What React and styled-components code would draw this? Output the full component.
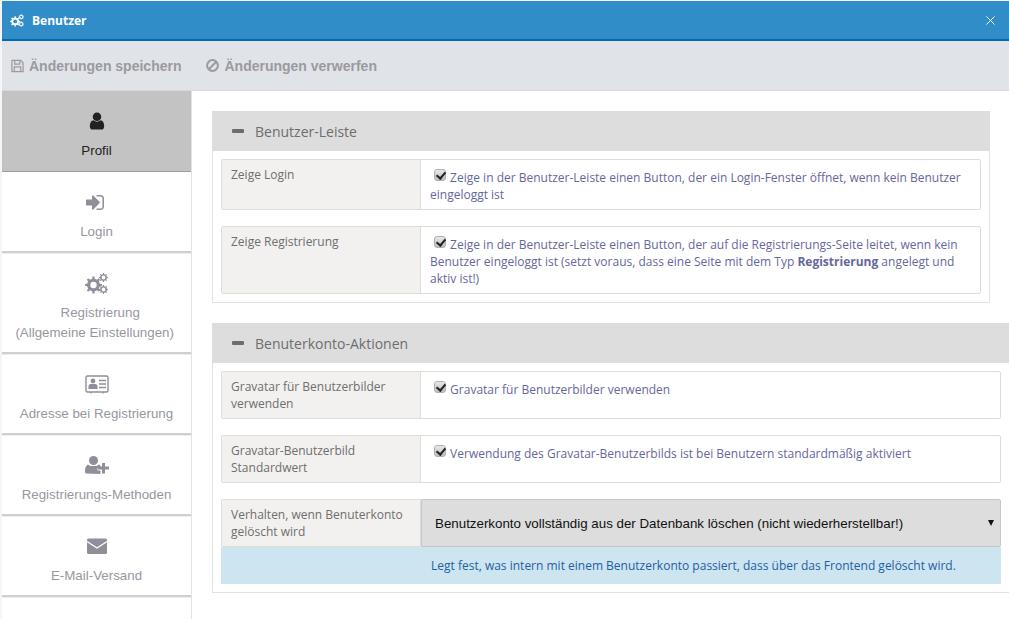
import React from 'react';
import styled, { createGlobalStyle } from 'styled-components';

const Global = createGlobalStyle`
  html, body { margin: 0; padding: 0; width: 1009px; height: 619px; overflow: hidden; background: #f5f5f5; }
  * { box-sizing: border-box; }
  #root { width: 1009px; height: 619px; overflow: hidden; }
`;
const Win = styled.div`
  margin: 1px 0 0 2px; width: 1007px; height: 618px; display: flex; flex-direction: column; background: #fff; overflow: hidden;
`;
const TitleBar = styled.header`
  height: 40px; flex: none; background: #308dc7; border-bottom: 2px solid #0069b4; display: flex; align-items: center;
  color: #fff; padding: 0 14px 0 8px; font: 700 12px "Open Sans", sans-serif;
`;
const TitleIcon = styled.span` display: flex; margin-right: 8px; `;
const Title = styled.span` flex: 1; `;
const Close = styled.svg` width: 9px; height: 9px; flex: none; `;
const Toolbar = styled.div`
  height: 50px; flex: none; background: #e0e3e8; border-bottom: 1px solid #d6d8dc; display: flex; align-items: center; padding: 0 0 0 9px; gap: 25px;
`;
const ToolBtn = styled.span`
  display: flex; align-items: center; gap: 5px; color: #9a9a9f; font: 700 14px "Liberation Sans", sans-serif; white-space: nowrap;
`;
const Body = styled.div` flex: 1; display: flex; min-height: 0; `;
const Side = styled.nav` width: 190px; flex: none; border-right: 1px solid #e2e2e2; `;
const Item = styled.div`
  height: ${p => p.$h || 81}px; display: flex; flex-direction: column; align-items: center; padding-top: 19px;
  background: ${p => p.$active ? '#c3c3c3' : 'transparent'};
  border-bottom: ${p => p.$active ? '1px solid #9c9c9c' : '0'};
  box-shadow: ${p => p.$active ? 'none' : 'inset 0 -2px 0 #cfcfcf, 0 1px 0 #ededed'};
  color: ${p => p.$active ? '#222' : '#97979f'};
  font: 13.33px/20px "Liberation Sans", sans-serif; text-align: center;
`;
const IconBox = styled.div`
  height: 22px; margin-bottom: 9px; display: flex; align-items: center; justify-content: center;
  color: ${p => p.$active ? '#222' : '#8e8f99'};
`;
const Main = styled.main` flex: 1; min-width: 0; padding: 20px 0 0 20px; overflow: hidden; `;
const Panel = styled.section`
  width: ${p => p.$w}px; margin-bottom: 20px; border: 1px solid #e2e2e2; border-top: 0;
  padding-bottom: ${p => p.$pb}px;
`;
const PanelHead = styled.div`
  height: 40px; margin: 0 -1px 8px; background: #dddddd; color: #6d6d6d; display: flex; align-items: center; padding-left: 20px; gap: 11px;
  font: 14px "Open Sans", sans-serif;
`;
const MinusBar = styled.span` width: 12px; height: 4px; border-radius: 1px; background: #6d6d6d; flex: none; `;
const Rows = styled.div` padding: 0 8px; display: flex; flex-direction: column; gap: ${p => p.$gap}px; `;
const Row = styled.div`
  display: flex; min-height: ${p => p.$h}px; border: 1px solid #e0dcd6; border-radius: 2px; background: #fff;
`;
const Label = styled.div`
  width: 199px; flex: none; background: #f2f1ef; border-right: 1px solid #e0dcd6; padding: 6px 9px;
  color: #6e6e6e; font: 12px/17px "Open Sans", sans-serif;
`;
const Value = styled.div`
  flex: 1; padding: 9px 9px 6px; color: #66679c; font: 12px/17px "Open Sans", sans-serif;
`;
const Check = styled.input.attrs({ type: 'checkbox', defaultChecked: true })`
  appearance: none; width: 12px; height: 12px; margin: 0 1px 0 4px; vertical-align: 1px; position: relative; border-radius: 3px;
  background: linear-gradient(#e8e8e8, #bdbdbd); border: 1px solid #b0b0b0;
  &::after { content: ""; position: absolute; left: 3px; top: 0; width: 4px; height: 7px; border: solid #222; border-width: 0 2px 2px 0; transform: rotate(40deg); }
`;
const SelectCell = styled.div`
  flex: 1; display: flex; position: relative; margin: -1px -1px -1px 0;
  &::after { content: ""; position: absolute; right: 7px; top: 21px; border: solid transparent; border-width: 6px 3px 0; border-top-color: #111; pointer-events: none; }
`;
const Select = styled.select`
  flex: 1; width: 100%; appearance: none; background: #dddddd; border: 1px solid #c6c6c6; border-radius: 2px; padding-left: 13px; color: #111; font: 13.33px "Liberation Sans", sans-serif; outline: 0;
`;
const Help = styled.div`
  height: 37px; background: #cde4f1; color: #1f5f9f; padding-left: 210px; display: flex; align-items: center; font: 12px "Open Sans", sans-serif;
`;

function gearPath(cx, cy, r, teeth, hole) {
  const rIn = r * 0.76;
  const pts = [];
  const step = (Math.PI * 2) / teeth;
  for (let i = 0; i < teeth; i++) {
    const a = i * step;
    const w = step * 0.2;
    [[a - w * 1.2, rIn], [a - w * 0.8, r], [a + w * 0.8, r], [a + w * 1.2, rIn]].forEach(([t, rad]) => {
      pts.push(`${(cx + rad * Math.cos(t)).toFixed(2)} ${(cy + rad * Math.sin(t)).toFixed(2)}`);
    });
  }
  const h = `M${cx - hole} ${cy}a${hole} ${hole} 0 1 0 ${hole * 2} 0a${hole} ${hole} 0 1 0 ${-hole * 2} 0z`;
  return `M${pts.join('L')}z${h}`;
}

const Cogs = ({ w = 23, h = 21 }) => (
  <svg width={w} height={h} viewBox="0 0 23 21" fill="currentColor" fillRule="evenodd">
    <path d={gearPath(8.500, 12, 8.500, 8, 3.200)} />
    <path d={gearPath(18.500, 4.500, 4.500, 8, 1.900)} />
    <path d={gearPath(18.500, 16.500, 4.500, 8, 1.900)} />
  </svg>
);
const User = () => (
  <svg width="20" height="20" viewBox="0 0 1792 1792" fill="currentColor">
    <path d="M1536 1399q0 109-62.500 187t-150.500 78h-854q-88 0-150.500-78t-62.500-187q0-85 8.500-160.500t31.500-152 58.500-131 94-89 134.500-34.500q131 128 313 128t313-128q76 0 134.500 34.500t94 89 58.500 131 31.500 152 8.500 160.500zm-256-887q0 159-112.500 271.500t-271.500 112.500-271.500-112.500-112.500-271.500 112.500-271.500 271.500-112.500 271.500 112.500 112.500 271.500z" />
  </svg>
);
const SignIn = () => (
  <svg width="21" height="21" viewBox="0 0 1792 1792" fill="currentColor">
    <path d="M1184 896q0 26-19 45l-544 544q-19 19-45 19t-45-19-19-45v-288h-448q-26 0-45-19t-19-45v-384q0-26 19-45t45-19h448v-288q0-26 19-45t45-19 45 19l544 544q19 19 19 45zm352-352v704q0 119-84.500 203.500t-203.500 84.500h-320q-13 0-22.500-9.500t-9.500-22.500q0-4-1-20t-.5-26.500 3-23.500 10-19.500 20.500-6.500h320q66 0 113-47t47-113v-704q0-66-47-113t-113-47h-320q-13 0-22.500-9.500t-9.500-22.500q0-4-1-20t-.5-26.500 3-23.500 10-19.500 20.500-6.500h320q119 0 203.500 84.500t84.500 203.500z" />
  </svg>
);
const AddressCard = () => (
  <svg width="24" height="19" viewBox="0 0 24 19" fill="none" stroke="currentColor">
    <rect x="1" y="1" width="22" height="16" rx="1.500" strokeWidth="1.400" />
    <path d="M6 17v1.500M18 17v1.500" strokeWidth="1.400" />
    <circle cx="8" cy="6" r="2.400" fill="currentColor" stroke="none" />
    <path d="M3.500 14v-2.500q0-2.500 2.500-2.500h4q2.500 0 2.500 2.500v2.500z" fill="currentColor" stroke="none" />
    <path d="M14 5.500h7M14 9h7M14 12.500h7" strokeWidth="1.400" />
  </svg>
);
const UserPlus = () => (
  <svg width="24" height="18" viewBox="0 0 24 18" fill="currentColor">
    <circle cx="8.500" cy="4.500" r="4.500" />
    <path d="M1 17.500q-1 0-1-2.500q0-5 3-6.500q1 .5 2.500 1.500h6q1-1 2.500-1.500 1 .5 1.500 1.500v2h-3v2.500h3v3.500z" />
    <path d="M17 7h3v3.500h4v3h-4v4h-3v-4h-4v-3h4z" />
  </svg>
);
const Envelope = () => (
  <svg width="20" height="16" viewBox="0 0 20 16">
    <rect x="0" y="0.500" width="20" height="15.500" rx="1.500" fill="currentColor" />
    <path d="M0 3.500l10 6.500 10-6.500" fill="none" stroke="#fff" strokeWidth="1.300" />
  </svg>
);
const Floppy = () => (
  <svg width="13" height="14" viewBox="0 0 14 14" fill="none" stroke="currentColor" strokeWidth="1.300">
    <path d="M1 1h9.500l2.500 2.500v9.500h-12z" />
    <path d="M4 1.500v3.500h5.500v-3.500M3.500 13v-5h7v5" />
  </svg>
);
const Ban = () => (
  <svg width="13" height="13" viewBox="0 0 13 13" fill="none" stroke="currentColor" strokeWidth="2">
    <circle cx="6.500" cy="6.500" r="5.400" />
    <path d="M2.800 10.200l7.400-7.400" />
  </svg>
);

const nav = [
  { icon: <User />, text: ['Profil'], active: true },
  { icon: <SignIn />, text: ['Login'] },
  { icon: <Cogs />, text: ['\u00a0\u00a0Registrierung', '(Allgemeine Einstellungen)\u00a0'], h: 101 },
  { icon: <AddressCard />, text: ['Adresse bei Registrierung'] },
  { icon: <UserPlus />, text: ['Registrierungs-Methoden'] },
  { icon: <Envelope />, text: ['E-Mail-Versand'] },
];

export default function App() {
  return (
    <>
      <Global />
      <Win>
        <TitleBar>
          <TitleIcon><Cogs w={14} h={13} /></TitleIcon>
          <Title>Benutzer</Title>
          <Close viewBox="0 0 9 9"><path d="M.5.5l8 8M8.500.5l-8 8" stroke="#fff" strokeWidth="1" /></Close>
        </TitleBar>
        <Toolbar>
          <ToolBtn><Floppy />Änderungen speichern</ToolBtn>
          <ToolBtn><Ban />Änderungen verwerfen</ToolBtn>
        </Toolbar>
        <Body>
          <Side>
            {nav.map(n => (
              <Item key={n.text[0]} $active={n.active} $h={n.h}>
                <IconBox $active={n.active}>{n.icon}</IconBox>
                {n.text.map(t => <div key={t}>{t}</div>)}
              </Item>
            ))}
          </Side>
          <Main>
            <Panel $w={778} $pb={8}>
              <PanelHead><MinusBar />Benutzer-Leiste</PanelHead>
              <Rows $gap={16}>
                <Row $h={51}>
                  <Label>Zeige Login</Label>
                  <Value><Check /> Zeige in der Benutzer-Leiste einen Button, der ein Login-Fenster öffnet, wenn kein Benutzer eingeloggt ist</Value>
                </Row>
                <Row $h={68}>
                  <Label>Zeige Registrierung</Label>
                  <Value><Check /> Zeige in der Benutzer-Leiste einen Button, der auf die Registrierungs-Seite leitet, wenn kein Benutzer eingeloggt ist (setzt voraus, dass eine Seite mit dem Typ <b>Registrierung</b> angelegt und aktiv ist!)</Value>
                </Row>
              </Rows>
            </Panel>
            <Panel $w={798} $pb={8}>
              <PanelHead><MinusBar />Benuterkonto-Aktionen</PanelHead>
              <Rows $gap={16}>
                <Row $h={48}>
                  <Label>Gravatar für Benutzerbilder verwenden</Label>
                  <Value><Check /> Gravatar für Benutzerbilder verwenden</Value>
                </Row>
                <Row $h={48}>
                  <Label>Gravatar-Benutzerbild Standardwert</Label>
                  <Value><Check /> Verwendung des Gravatar-Benutzerbilds ist bei Benutzern standardmäßig aktiviert</Value>
                </Row>
                <div>
                  <Row $h={48}>
                    <Label>Verhalten, wenn Benuterkonto gelöscht wird</Label>
                    <SelectCell>
                      <Select defaultValue="a"><option value="a">Benutzerkonto vollständig aus der Datenbank löschen (nicht wiederherstellbar!)</option></Select>
                    </SelectCell>
                  </Row>
                  <Help>Legt fest, was intern mit einem Benutzerkonto passiert, dass über das Frontend gelöscht wird.</Help>
                </div>
              </Rows>
            </Panel>
          </Main>
        </Body>
      </Win>
    </>
  );
}
